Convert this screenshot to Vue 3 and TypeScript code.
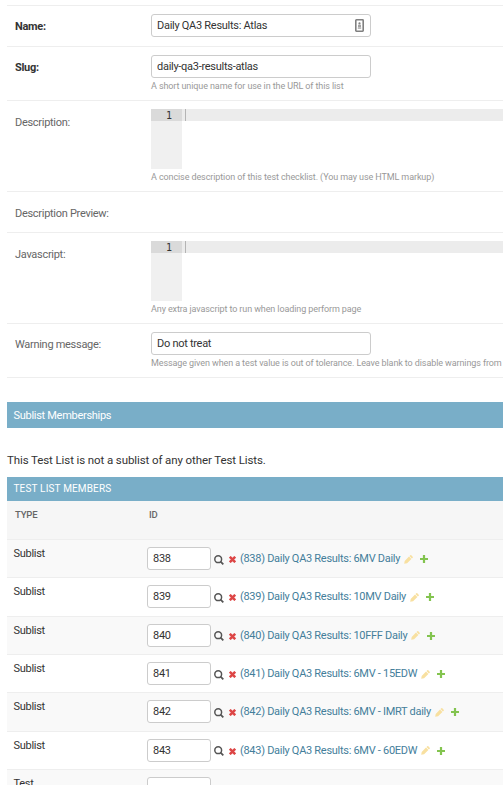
<script setup lang="ts">
interface Field {
  label: string
  kind: 'text' | 'editor' | 'empty'
  required?: boolean
  value?: string
  help?: string
  badge?: boolean
}

interface Member {
  id: number
  name: string
}

const fields: Field[] = [
  { label: 'Name:', kind: 'text', required: true, value: 'Daily QA3 Results: Atlas', badge: true },
  { label: 'Slug:', kind: 'text', required: true, value: 'daily-qa3-results-atlas', help: 'A short unique name for use in the URL of this list' },
  { label: 'Description:', kind: 'editor', help: 'A concise description of this test checklist. (You may use HTML markup)' },
  { label: 'Description Preview:', kind: 'empty' },
  { label: 'Javascript:', kind: 'editor', help: 'Any extra javascript to run when loading perform page' },
  { label: 'Warning message:', kind: 'text', value: 'Do not treat', help: 'Message given when a test value is out of tolerance. Leave blank to disable warnings from' },
]

const members: Member[] = [
  { id: 838, name: 'Daily QA3 Results: 6MV Daily' },
  { id: 839, name: 'Daily QA3 Results: 10MV Daily' },
  { id: 840, name: 'Daily QA3 Results: 10FFF Daily' },
  { id: 841, name: 'Daily QA3 Results: 6MV - 15EDW' },
  { id: 842, name: 'Daily QA3 Results: 6MV - IMRT daily' },
  { id: 843, name: 'Daily QA3 Results: 6MV - 60EDW' },
]
</script>

<template>
  <main class="page">
    <section class="fields">
      <div v-for="f in fields" :key="f.label" class="row" :class="f.kind">
        <label class="label" :class="{ required: f.required }">{{ f.label }}</label>
        <div class="control">
          <div v-if="f.kind === 'text'" class="box">
            <input class="input" type="text" :value="f.value" />
            <svg v-if="f.badge" class="badge" viewBox="0 0 9 13" width="9" height="13">
              <rect x="0.8" y="0.8" width="7.4" height="11.4" rx="0.6" fill="#fff" stroke="#808080" stroke-width="1.6" />
              <circle cx="4.5" cy="4.4" r="1.1" fill="#808080" />
              <path d="M3 6.3h3M3 7.7h3M2.8 9.1h3.4" stroke="#808080" stroke-width="0.9" />
            </svg>
          </div>
          <div v-else-if="f.kind === 'editor'" class="editor">
            <div class="gutter"><div class="line-no">1</div></div>
            <div class="code"><div class="active-line"><span class="caret"></span></div></div>
          </div>
          <p v-if="f.help" class="help">{{ f.help }}</p>
        </div>
      </div>
    </section>

    <h2 class="banner">Sublist Memberships</h2>
    <p class="note">This Test List is not a sublist of any other Test Lists.</p>

    <section class="members">
      <h2 class="banner caps">TEST LIST MEMBERS</h2>
      <div class="head"><span class="type">TYPE</span><span>ID</span></div>
      <div v-for="m in members" :key="m.id" class="member">
        <span class="type">Sublist</span>
        <div class="ref">
          <input class="input id" type="text" :value="m.id" />
          <svg class="search" viewBox="0 0 10 10" width="10" height="10">
            <circle cx="4.2" cy="4.2" r="3.4" fill="none" stroke="#555" stroke-width="1.5" />
            <path d="M6.6 6.6L9.3 9.3" stroke="#555" stroke-width="1.8" />
          </svg>
          <svg class="remove" viewBox="0 0 7 7" width="7" height="7">
            <path d="M0.8 0.8L6.2 6.2M6.2 0.8L0.8 6.2" stroke="#dd4646" stroke-width="2.5" />
          </svg>
          <a class="link">({{ m.id }}) {{ m.name }}</a>
          <svg class="edit" viewBox="0 0 9 9" width="9" height="9">
            <path d="M0.2 8.8L0.7 5.9L5 1.6L7.4 4L3.1 8.3ZM5.5 1.1L6.3 0.3Q6.8 -0.1 7.3 0.3L8.7 1.7Q9.1 2.2 8.7 2.7L7.9 3.5Z" fill="#f8e0a0" />
          </svg>
          <svg class="add" viewBox="0 0 8 8" width="8" height="8">
            <path d="M4 0V8M0 4H8" stroke="#83c44f" stroke-width="2.2" />
          </svg>
        </div>
      </div>
      <div class="member">
        <span class="type">Test</span>
        <div class="ref"><input class="input id" type="text" value="" /></div>
      </div>
    </section>
  </main>
</template>

<style>
body {
  margin: 0;
  background: #fff;
}
</style>

<style scoped>
.page {
  box-sizing: border-box;
  width: 503px;
  height: 785px;
  overflow: hidden;
  padding: 5px 0 0 7px;
  font-family: Roboto, 'Liberation Sans', sans-serif;
  font-size: 11px;
  letter-spacing: -0.29px;
  color: #333;
  background: #fff;
}
.fields {
  border-top: 1px solid #eee;
}
.row {
  box-sizing: border-box;
  display: flex;
  height: 54px;
  padding: 8px 0 0 8px;
  border-bottom: 1px solid #eee;
}
.row:first-child,
.row.empty {
  height: 41px;
}
.row.editor {
  height: 91px;
}
.label {
  flex: 0 0 136px;
  padding-top: 5px;
  line-height: 15px;
  color: #666;
}
.row.editor .label,
.row.empty .label {
  padding-top: 6px;
}
.label.required {
  font-weight: 700;
  color: #333;
}
.control {
  flex: 1;
  min-width: 0;
}
.box {
  position: relative;
  width: 220px;
  height: 23px;
}
.input {
  display: block;
  box-sizing: border-box;
  width: 220px;
  height: 23px;
  margin: 0;
  padding: 0 5px;
  border: 1px solid #ccc;
  border-radius: 3px;
  outline: none;
  background: #fff;
  font: 11px Roboto, 'Liberation Sans', sans-serif;
  letter-spacing: -0.28px;
  color: #333;
}
.badge {
  position: absolute;
  top: 5px;
  right: 7px;
}
.help {
  margin: 2px 0 0;
  font-size: 9px;
  line-height: 13px;
  letter-spacing: -0.1px;
  color: #999;
  white-space: nowrap;
}
.control .editor {
  display: flex;
  height: 60px;
}
.gutter {
  width: 31px;
  background: #f0f0f0;
}
.line-no {
  height: 12px;
  padding-right: 10px;
  background: #dadada;
  font: 10px/13px 'DejaVu Sans Mono', monospace;
  letter-spacing: 0;
  text-align: right;
  color: #333;
}
.code {
  flex: 1;
}
.active-line {
  display: flex;
  height: 12px;
  padding-left: 3px;
  background: #ececec;
}
.caret {
  width: 1px;
  background: #b4b4b4;
}
.banner {
  margin: 24px 0 0;
  padding-left: 6.5px;
  height: 26px;
  font-size: 11px;
  font-weight: 400;
  line-height: 27px;
  color: #fff;
  background: #79aec8;
}
.note {
  margin: 24px 0 9px;
  font-size: 11.5px;
  line-height: 16px;
  letter-spacing: -0.1px;
}
.banner.caps {
  margin: 0;
  height: 24px;
  font-size: 10px;
  line-height: 24px;
  letter-spacing: 0.15px;
}
.head {
  box-sizing: border-box;
  display: flex;
  height: 39px;
  padding: 7px 0 0 8px;
  border-bottom: 1px solid #eee;
  background: #f6f6f6;
  font-size: 9.5px;
  font-weight: 500;
  line-height: 14px;
  letter-spacing: -0.15px;
  color: #666;
}
.head .type {
  flex: 0 0 134px;
}
.member {
  box-sizing: border-box;
  display: flex;
  height: 38.35px;
  padding: 7px 0 0 6.5px;
  border-bottom: 1px solid #eee;
}
.member:nth-child(odd) {
  background: #f9f9f9;
}
.member .type {
  flex: 0 0 133.5px;
  line-height: 13px;
}
.ref {
  display: flex;
  align-items: center;
  height: 23px;
}
.input.id {
  width: 64px;
}
.search {
  margin: 2px 0 0 3px;
}
.remove {
  margin: 2px 0 0 5px;
}
.link {
  margin-left: 4px;
  color: #447e9b;
  white-space: nowrap;
}
.edit {
  margin: 1px 0 0 4px;
}
.add {
  margin: 1px 0 0 7px;
}
</style>
